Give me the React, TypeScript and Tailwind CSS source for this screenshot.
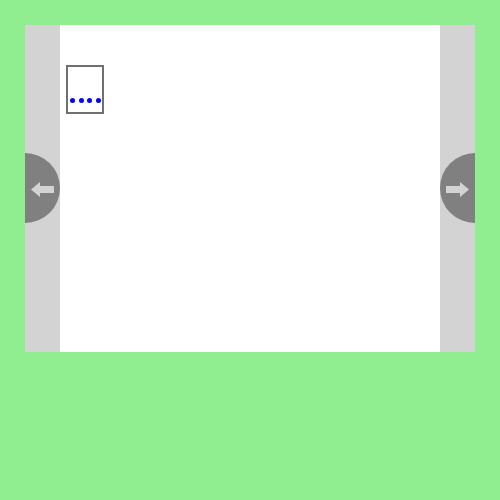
export default function App() {
  return (
    <div className="min-h-[500px] w-[500px] bg-[#90ee90] p-[25px]">
      <div className="flex h-[327px] w-[450px] overflow-hidden">
        {/* left rail */}
        <div className="relative w-[35px] shrink-0 bg-[#d3d3d3]">
          <div className="absolute left-[-35px] top-[128px] h-[70px] w-[70px] rounded-full bg-[#808080]">
            <svg width="70" height="70" viewBox="0 0 70 70">
              <polygon points="41,36.5 50,29 50,33 64,33 64,40 50,40 50,44" fill="#d3d3d3" />
            </svg>
          </div>
        </div>

        {/* stage */}
        <div className="flex-1 bg-white pl-[6px] pt-[40px]">
          <div className="flex h-[49px] w-[38px] flex-col justify-end border-2 border-[#707070] pb-[9px] pl-[2px]">
            <div className="flex gap-[3.7px]">
              <span className="h-[5px] w-[5px] rounded-full bg-[#0000ff]" />
              <span className="h-[5px] w-[5px] rounded-full bg-[#0000ff]" />
              <span className="h-[5px] w-[5px] rounded-full bg-[#0000ff]" />
              <span className="h-[5px] w-[5px] rounded-full bg-[#0000ff]" />
            </div>
          </div>
        </div>

        {/* right rail */}
        <div className="relative w-[35px] shrink-0 bg-[#d3d3d3]">
          <div className="absolute left-0 top-[128px] h-[70px] w-[70px] rounded-full bg-[#808080]">
            <svg width="70" height="70" viewBox="0 0 70 70">
              <polygon points="29,36.5 20,29 20,33 6,33 6,40 20,40 20,44" fill="#d3d3d3" />
            </svg>
          </div>
        </div>
      </div>
    </div>
  );
}
